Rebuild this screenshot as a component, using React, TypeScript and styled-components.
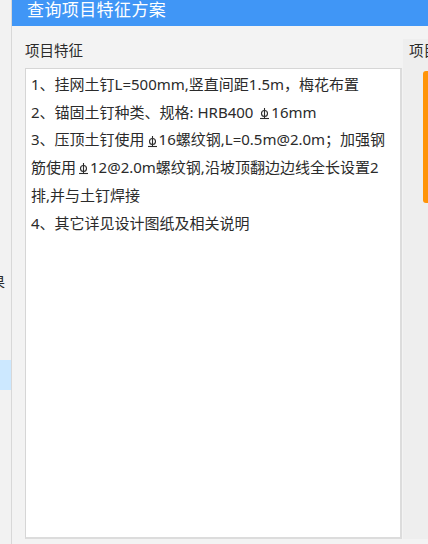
import React from "react";
import styled, { createGlobalStyle } from "styled-components";

const GlobalStyle = createGlobalStyle`
  html, body {
    margin: 0;
    padding: 0;
    width: 428px;
    height: 544px;
    overflow: hidden;
    background: #f3f3f3;
  }
  #root {
    height: 544px;
  }
`;

const Page = styled.div`
  display: flex;
  height: 544px;
  font-family: "Noto Sans", "Noto Sans CJK SC", sans-serif;
  color: #2b2b2b;
`;

const LeftStrip = styled.div`
  width: 11px;
  flex: none;
  border-right: 1px solid #d8d8d8;
  background: #f2f2f2;
  display: flex;
  flex-direction: column;
  overflow: hidden;
`;

const LeftItem = styled.div<{ $top: number; $selected?: boolean }>`
  margin-top: ${(p) => p.$top}px;
  height: ${(p) => (p.$selected ? 30 : 18)}px;
  display: flex;
  justify-content: flex-end;
  align-items: center;
  background: ${(p) => (p.$selected ? "#cce8ff" : "transparent")};
  font-size: 14px;
  white-space: nowrap;
  span {
    flex: none;
    margin-right: 6px;
  }
`;

const Dialog = styled.div`
  flex: 1;
  display: flex;
  flex-direction: column;
  min-width: 0;
`;

const TitleBar = styled.div`
  height: 26px;
  flex: none;
  background: #4096f6;
  color: #ffffff;
  font-size: 17px;
  line-height: 20px;
  padding-left: 15px;
  letter-spacing: 0.4px;
  white-space: nowrap;
`;

const Body = styled.div`
  flex: 1;
  display: flex;
  min-height: 0;
`;

const MainColumn = styled.div`
  flex: none;
  width: 377px;
  padding: 14px 0 5px 13px;
  display: flex;
  flex-direction: column;
`;

const Label = styled.div`
  font-size: 14.5px;
  line-height: 20px;
  height: 20px;
  margin-bottom: 8px;
`;

const TextBox = styled.div`
  flex: 1;
  background: #ffffff;
  border: 1px solid #d6d6d6;
  border-right: 2px solid #dcdcdc;
  border-bottom: 2px solid #dcdcdc;
  padding: 2px 0 0 5px;
  overflow: hidden;
`;

const Line = styled.div`
  font-size: 15px;
  line-height: 27.7px;
  white-space: nowrap;
  display: flex;
  align-items: center;
`;

const SidePanel = styled.div`
  flex: 1;
  min-width: 0;
  margin: 13px 0 5px 1px;
  background: #eeeeee;
  display: flex;
  flex-direction: column;
  overflow: hidden;
`;

const SideLabel = styled.div`
  font-size: 14.5px;
  line-height: 20px;
  padding: 1px 0 0 6px;
  white-space: nowrap;
`;

const OrangeBar = styled.div`
  margin: 11px 0 0 20px;
  height: 132px;
  background: #ff9408;
  border-radius: 3px 0 0 3px;
`;

const SteelSym = () => (
  <svg
    width="11"
    height="15"
    viewBox="0 0 11 15"
    style={{ margin: "0 1px 0 2px" }}
    aria-label="HRB400"
  >
    <circle cx="5.5" cy="8.5" r="3" fill="none" stroke="#2b2b2b" strokeWidth="1.1" />
    <line x1="5.5" y1="3" x2="5.5" y2="13" stroke="#2b2b2b" strokeWidth="1.1" />
    <line x1="1" y1="13.5" x2="10" y2="13.5" stroke="#2b2b2b" strokeWidth="1.1" />
  </svg>
);

export default function App() {
  return (
    <>
      <GlobalStyle />
      <Page>
        <LeftStrip>
          <LeftItem $top={272}>
            <span>果</span>
          </LeftItem>
          <LeftItem $top={70} $selected />
        </LeftStrip>
        <Dialog>
          <TitleBar>查询项目特征方案</TitleBar>
          <Body>
            <MainColumn>
              <Label>项目特征</Label>
              <TextBox>
                <Line>1、挂网土钉L=500mm,竖直间距1.5m，梅花布置</Line>
                <Line>
                  2、锚固土钉种类、规格: HRB400&nbsp;
                  <SteelSym />
                  16mm
                </Line>
                <Line>
                  3、压顶土钉使用
                  <SteelSym />
                  16螺纹钢,L=0.5m@2.0m；加强钢
                </Line>
                <Line>
                  筋使用
                  <SteelSym />
                  12@2.0m螺纹钢,沿坡顶翻边边线全长设置2
                </Line>
                <Line>排,并与土钉焊接</Line>
                <Line>4、其它详见设计图纸及相关说明</Line>
              </TextBox>
            </MainColumn>
            <SidePanel>
              <SideLabel>项目</SideLabel>
              <OrangeBar />
            </SidePanel>
          </Body>
        </Dialog>
      </Page>
    </>
  );
}
